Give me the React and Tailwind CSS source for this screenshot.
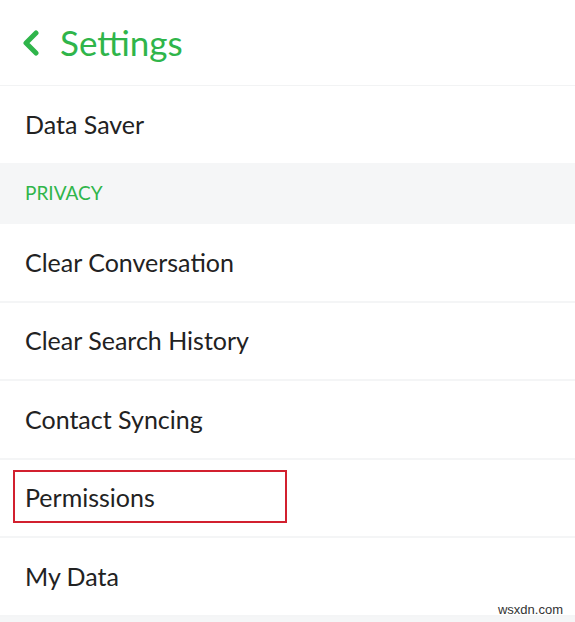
export default function App() {
  const rows = ["Clear Conversation", "Clear Search History", "Contact Syncing", "Permissions", "My Data"];
  return (
    <div className="relative w-[575px] h-[622px] bg-white overflow-hidden" style={{ fontFamily: "Lato, 'Noto Sans', sans-serif" }}>
      <div className="h-[86px] flex items-center border-b border-[#f2f3f4]">
        <svg className="ml-[22px]" width="18" height="26" viewBox="0 0 18 26">
          <path d="M14 3 L4 13 L14 23" fill="none" stroke="#2fb54a" strokeWidth="5" strokeLinecap="round" strokeLinejoin="round" />
        </svg>
        <span className="ml-[20px] text-[35px] text-[#2fb54a] leading-none">Settings</span>
      </div>
      <div className="h-[77px] flex items-center pl-[25px] text-[25px] text-[#222]">Data Saver</div>
      <div className="h-[61px] flex items-center pl-[25px] bg-[#f5f6f7] text-[19px] text-[#2fb54a]">PRIVACY</div>
      {rows.map((r) => (
        <div key={r} className="relative h-[78.5px] flex items-center pl-[25px] text-[25px] text-[#222] border-b-[2px] border-[#f4f5f6]">
          {r === "Permissions" && (
            <div className="absolute left-[13px] top-[10px] w-[274px] h-[53px] border-2 border-[#d2202f]" />
          )}
          <span className="relative">{r}</span>
        </div>
      ))}
      <div className="h-[20px] bg-[#f5f6f7]" />
      <div className="absolute right-[12px] bottom-[3px] text-[13px] text-[#333]" style={{ fontFamily: "'Liberation Sans', sans-serif" }}>wsxdn.com</div>
    </div>
  );
}
